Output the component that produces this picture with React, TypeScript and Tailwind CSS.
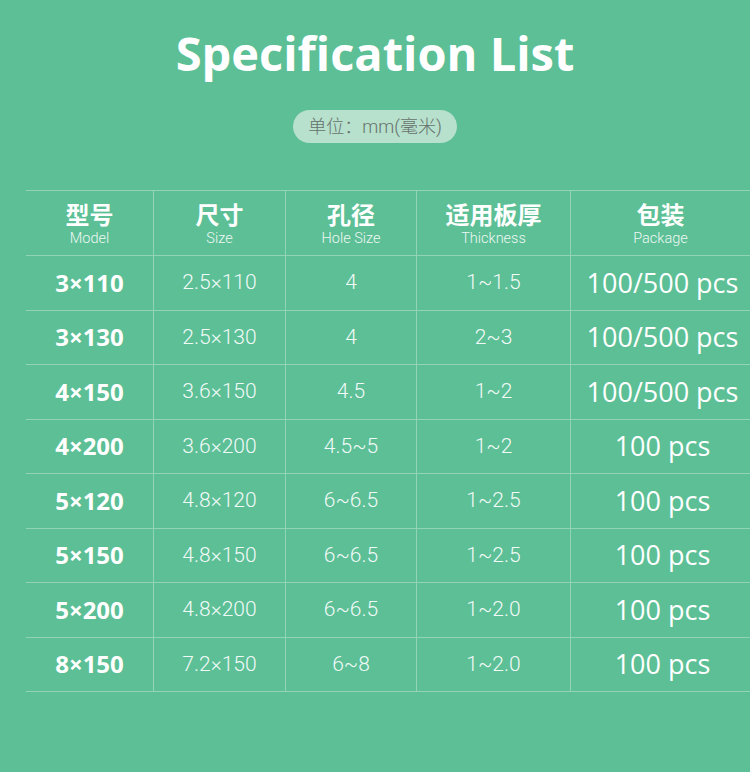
const headers = [
  { cn: "型号", en: "Model" },
  { cn: "尺寸", en: "Size" },
  { cn: "孔径", en: "Hole Size" },
  { cn: "适用板厚", en: "Thickness" },
  { cn: "包装", en: "Package" },
];

const rows = [
  ["3×110", "2.5×110", "4", "1~1.5", "100/500 pcs"],
  ["3×130", "2.5×130", "4", "2~3", "100/500 pcs"],
  ["4×150", "3.6×150", "4.5", "1~2", "100/500 pcs"],
  ["4×200", "3.6×200", "4.5~5", "1~2", "100 pcs"],
  ["5×120", "4.8×120", "6~6.5", "1~2.5", "100 pcs"],
  ["5×150", "4.8×150", "6~6.5", "1~2.5", "100 pcs"],
  ["5×200", "4.8×200", "6~6.5", "1~2.0", "100 pcs"],
  ["8×150", "7.2×150", "6~8", "1~2.0", "100 pcs"],
];

const colWidths = ["w-[128px]", "w-[132px]", "w-[131px]", "w-[154px]", "flex-1"];

export default function App() {
  return (
    <div className="w-[750px] h-[772px] bg-[#5cbf96] overflow-hidden font-['Open_Sans','Noto_Sans_CJK_SC',sans-serif]">
      {/* Title */}
      <div className="pt-[23px] text-center">
        <h1 className="text-[47px] leading-[60px] font-bold text-white">
          Specification List
        </h1>
      </div>

      <div className="mt-[27px] flex justify-center">
        <div className="h-[33px] px-[15px] rounded-full bg-[#b7e0cd] flex items-center text-[18px] text-[#66716c] font-['Roboto','Noto_Sans_CJK_SC',sans-serif] font-light">
          单位：mm(毫米)
        </div>
      </div>

      {/* Table */}
      <div className="mt-[47px] ml-[26px] border-t border-[#93d4b8]">
        <div className="flex h-[65px] border-b border-[#93d4b8]">
          {headers.map((h, i) => (
            <div
              key={h.en}
              className={`${colWidths[i]} ${i < 4 ? "border-r border-[#93d4b8]" : ""} flex flex-col items-center justify-center text-white`}
            >
              <span className="text-[24px] leading-[32px] font-bold font-['Noto_Sans_CJK_SC',sans-serif]">
                {h.cn}
              </span>
              <span className="text-[14.5px] leading-[18px] font-light text-[#eef8f3] font-['Roboto',sans-serif]">
                {h.en}
              </span>
            </div>
          ))}
        </div>

        {rows.map((r) => (
          <div key={r[0] + r[1]} className="flex h-[54.5px] border-b border-[#93d4b8]">
            <div className="w-[128px] border-r border-[#93d4b8] flex items-center justify-center text-white text-[24px] font-bold font-['Open_Sans',sans-serif]">
              {r[0]}
            </div>
            <div className="w-[132px] border-r border-[#93d4b8] flex items-center justify-center text-[#f1faf6] text-[21px] font-light font-['Roboto',sans-serif]">
              {r[1]}
            </div>
            <div className="w-[131px] border-r border-[#93d4b8] flex items-center justify-center text-[#f1faf6] text-[21px] font-light font-['Roboto',sans-serif]">
              {r[2]}
            </div>
            <div className="w-[154px] border-r border-[#93d4b8] flex items-center justify-center text-[#f1faf6] text-[21px] font-light font-['Roboto',sans-serif]">
              {r[3]}
            </div>
            <div className="flex-1 flex items-center justify-center pl-[4px] text-white text-[27px] font-['Open_Sans',sans-serif]">
              {r[4]}
            </div>
          </div>
        ))}
      </div>
    </div>
  );
}
